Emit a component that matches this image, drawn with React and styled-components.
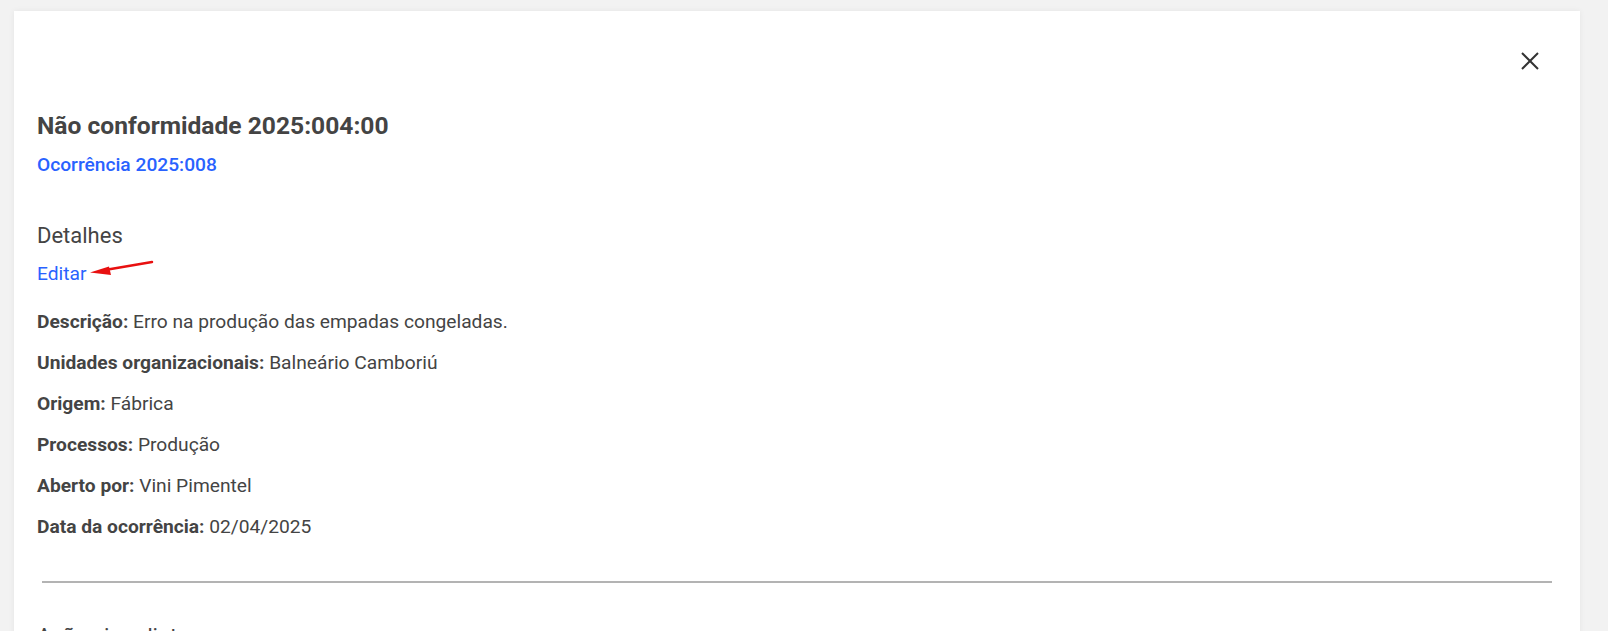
import React from 'react';
import styled, { createGlobalStyle } from 'styled-components';

const GlobalStyle = createGlobalStyle`
	html, body {
		margin: 0;
		padding: 0;
		background: #f2f2f2;
		font-family: Roboto, 'Liberation Sans', Arial, sans-serif;
		color: #444;
		overflow: hidden;
	}
`;

const Page = styled.div`
	padding: 11px 28px 0 14px;
	height: 631px;
	box-sizing: border-box;
`;

const Card = styled.div`
	background: #fff;
	min-height: 700px;
	padding: 0 23px;
	box-shadow: 0 0 6px rgba(0, 0, 0, 0.06);
`;

const TopBar = styled.div`
	display: flex;
	justify-content: flex-end;
	padding: 34px 11px 0 0;
	height: 66px;
	box-sizing: border-box;
`;

const CloseButton = styled.button`
	width: 32px;
	height: 32px;
	display: flex;
	align-items: center;
	justify-content: center;
	border: none;
	background: none;
	padding: 0;
	cursor: pointer;
	color: #333;
`;

const Title = styled.h2`
	margin: 34px 0 0;
	font-size: 24.6px;
	font-weight: 700;
	line-height: 30px;
	color: #444;
`;

const Link = styled.a`
	display: inline-block;
	color: #2962ff;
	font-size: 19.2px;
	font-weight: ${(p) => p.weight || 400};
	text-decoration: none;
	cursor: pointer;
`;

const SubLink = styled.div`
	margin-top: 12px;
	line-height: 24px;
`;

const SectionTitle = styled.h3`
	margin: ${(p) => p.top || 44}px 0 0;
	font-size: 22px;
	font-weight: 400;
	line-height: 28px;
	color: #444;
`;

const EditRow = styled.div`
	position: relative;
	margin-top: 12px;
	line-height: 24px;
	height: 24px;
`;

const Arrow = styled.svg`
	position: absolute;
	left: 50px;
	top: -6px;
`;

const Details = styled.div`
	margin-top: 24px;
	display: flex;
	flex-direction: column;
	gap: 17px;
`;

const Row = styled.div`
	font-size: 19.2px;
	line-height: 24px;
	color: #444;

	b {
		font-weight: 700;
	}
`;

const Divider = styled.hr`
	margin: 42px 5px 0;
	border: none;
	border-top: 2px solid #b3b3b3;
`;

const details = [
	['Descrição', 'Erro na produção das empadas congeladas.'],
	['Unidades organizacionais', 'Balneário Camboriú'],
	['Origem', 'Fábrica'],
	['Processos', 'Produção'],
	['Aberto por', 'Vini Pimentel'],
	['Data da ocorrência', '02/04/2025'],
];

export default function App() {
	return (
		<>
			<GlobalStyle />
			<Page>
				<Card>
					<TopBar>
						<CloseButton aria-label='Fechar'>
							<svg width='20' height='20' viewBox='0 0 20 20'>
								<path
									d='M2 2 L18 18 M18 2 L2 18'
									stroke='#333'
									strokeWidth='2'
									fill='none'
								/>
							</svg>
						</CloseButton>
					</TopBar>
					<Title>Não conformidade 2025:004:00</Title>
					<SubLink>
						<Link weight={500}>Ocorrência 2025:008</Link>
					</SubLink>
					<SectionTitle>Detalhes</SectionTitle>
					<EditRow>
						<Link>Editar</Link>
						{/* red annotation arrow pointing at Editar */}
						<Arrow width='70' height='26' viewBox='0 0 70 26'>
							<path d='M18 14 L65 6' stroke='#e81010' strokeWidth='2.5' strokeLinecap='round' />
							<path d='M3 16.5 L22 10.5 L24 19 Z' fill='#e81010' />
						</Arrow>
					</EditRow>
					<Details>
						{details.map(([label, value]) => (
							<Row key={label}>
								<b>{label}:</b> {value}
							</Row>
						))}
					</Details>
					<Divider />
					<SectionTitle top={40}>Ações imediatas</SectionTitle>
				</Card>
			</Page>
		</>
	);
}
